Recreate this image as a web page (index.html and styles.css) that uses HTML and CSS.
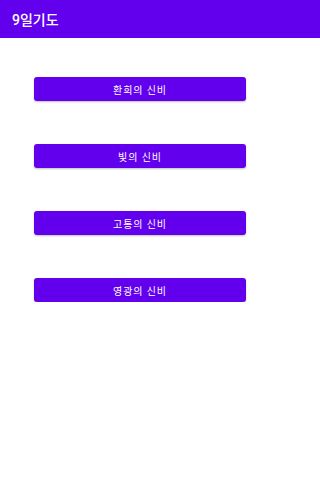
FILE: index.html
```html
<!DOCTYPE html>
<html lang="ko">
<head>
<meta charset="utf-8">
<link rel="stylesheet" href="styles.css">
</head>
<body>
<header class="appbar"><span class="title">9일기도</span></header>
<main class="list">
  <button class="btn">환희의 신비</button>
  <button class="btn">빛의 신비</button>
  <button class="btn">고통의 신비</button>
  <button class="btn">영광의 신비</button>
</main>
</body>
</html>
```
FILE: styles.css
```css
html, body {
  margin: 0;
  padding: 0;
  background: #ffffff;
  font-family: Roboto, "Noto Sans CJK KR", sans-serif;
}
.appbar {
  height: 38px;
  background: #6200ee;
  display: flex;
  align-items: center;
  padding-left: 12px;
}
.title {
  color: #ffffff;
  font-size: 14px;
  font-weight: 500;
}
.list {
  display: flex;
  flex-direction: column;
  align-items: flex-start;
  gap: 43px;
  padding-top: 39px;
  padding-left: 34px;
}
.btn {
  width: 212px;
  height: 24px;
  border: none;
  border-radius: 3px;
  background: #6200ee;
  color: #ffffff;
  font-family: Roboto, "Noto Sans CJK KR", sans-serif;
  font-size: 10px;
  font-weight: 400;
  letter-spacing: 0.9px;
  padding: 0;
  box-shadow: 0 1px 2px rgba(0,0,0,0.25);
}
```
